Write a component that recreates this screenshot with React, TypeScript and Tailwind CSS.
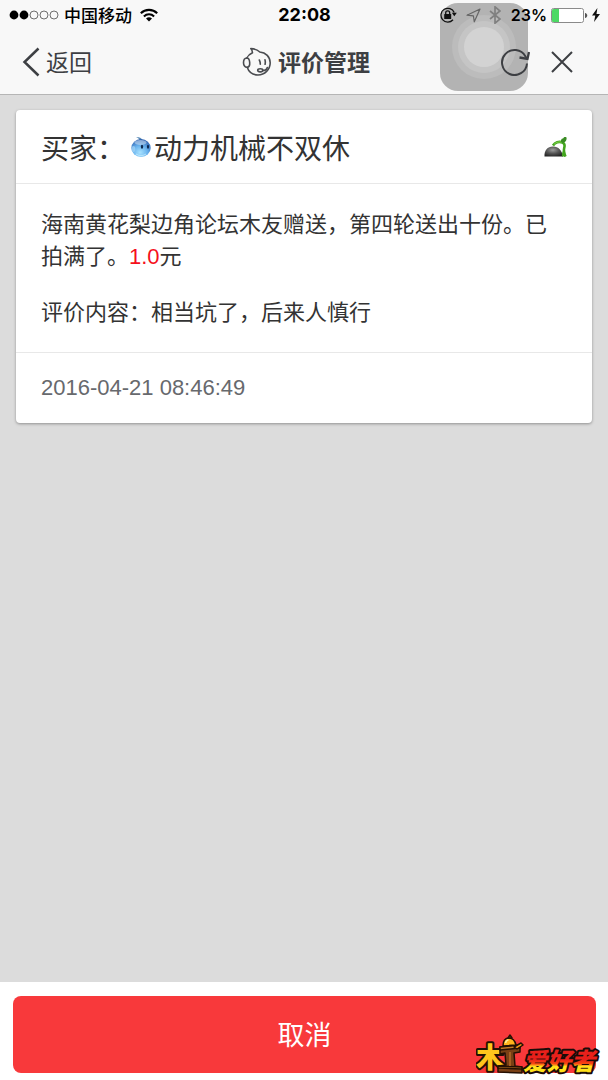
import { useState } from "react";

type Review = {
    buyer: string;
    product: string;
    price: string;
    content: string;
    time: string;
};

const review: Review = {
    buyer: "动力机械不双休",
    product: "海南黄花梨边角论坛木友赠送，第四轮送出十份。已拍满了。",
    price: "1.0",
    content: "相当坑了，后来人慎行",
    time: "2016-04-21 08:46:49",
};

const SignalDots = () => (
    <svg className="w-[50px] h-[10px]" viewBox="0 0 50 10" fill="none">
        {[0, 1, 2, 3, 4].map((i) => (
            <circle key={i} cx={5 + i * 10} cy="5" r={i < 2 ? 4.4 : 4} fill={i < 2 ? "#000" : "none"} stroke={i < 2 ? "none" : "#333"} strokeWidth="0.7" />
        ))}
    </svg>
);

const Wifi = () => (
    <svg className="w-[18px] h-[14px]" viewBox="0 0 18 14" fill="none" stroke="#000" strokeWidth="2.1">
        <path d="M0.8 5.2a11.7 11.7 0 0 1 16.4 0" />
        <path d="M3.9 8.4a7.3 7.3 0 0 1 10.2 0" />
        <path d="M9 13.4 6 10.6a4.3 4.3 0 0 1 6 0z" fill="#000" stroke="none" />
    </svg>
);

const RotationLock = () => (
    <svg className="w-[17px] h-[16px]" viewBox="0 0 17 16" fill="none" stroke="#111">
        <path d="M14.2 5.500A6.900 6.900 0 1 0 13 12.800" strokeWidth="1.300" />
        <path d="M11.800 5.800h5l-2.500 3.400z" fill="#111" stroke="none" />
        <rect x="4.200" y="7" width="7" height="5" rx="0.600" fill="#111" stroke="none" />
        <path d="M5.700 7.400V5.800a2 2 0 0 1 4 0v1.600" strokeWidth="1.300" />
    </svg>
);

const Location = () => (
    <svg className="w-[15px] h-[15px]" viewBox="0 0 15 15" fill="none" stroke="#666" strokeWidth="1.200">
        <path d="M14 1 8.300 13.800 7.400 7.800 1 7.200z" strokeLinejoin="round" />
    </svg>
);

const Bluetooth = () => (
    <svg className="w-[12px] h-[18px]" viewBox="0 0 12 18" fill="none" stroke="#808080" strokeWidth="1.700">
        <path d="M1 5l10 8-5 4.200V.8L11 5 1 13" />
    </svg>
);

const Battery = () => (
    <svg className="w-[37px] h-[15px]" viewBox="0 0 37 15" fill="none">
        <rect x="0.500" y="0.500" width="32" height="14" rx="2" fill="#fff" stroke="#8a8a8a" />
        <path d="M2.500 1H8v13H2.500A1.500 1.500 0 0 1 1 12.500v-10A1.500 1.500 0 0 1 2.500 1z" fill="#4cd964" />
        <path d="M34 5c3 .6 3 4.400 0 5z" fill="#555" />
    </svg>
);

const Bolt = () => (
    <svg className="w-[8px] h-[14px]" viewBox="0 0 8 14">
        <path d="M5.400 0 0 7.600h3.300L2 14l6-8H4.500z" fill="#111" />
    </svg>
);

const WangWangOutline = () => (
    <svg className="w-[30px] h-[30px]" viewBox="0 0 30 30" fill="none" stroke="#4a4c50" strokeWidth="1.600" strokeLinecap="round" strokeLinejoin="round">
        <path d="M4.800 11C6 8.500 8.200 6.800 10.500 5.800 10.500 4.300 9.900 2.700 8.800 1.500c3.300.2 6.500 1.200 9 3.500 6 .5 10.400 5 10.400 10.800C28.200 22.500 22.700 28 16 28c-5 0-9.200-3-10.800-7.700" />
        <path d="M4.800 11C2.700 11.200 1.500 13 1.500 15.700c0 2.700 1.500 4.800 3.700 4.600 2-.2 2.700-2.300 2.500-4.800C7.500 12.900 6.500 11 4.800 11z" />
        <path d="M17.300 13c.7 1.300 1 2.700 1 4.300M23 12.800c.4 1.400.4 3 .1 4.500" />
        <path d="M25.300 20.500c-.4 2-2 3-4.600 3" />
        <ellipse cx="18.300" cy="23.300" rx="2.600" ry="1.600" />
    </svg>
);

const WangWangBlue = () => (
    <svg className="w-[22px] h-[22px]" viewBox="0 0 22 22">
        <defs>
            <radialGradient id="wwBody" cx="0.45" cy="0.75" r="0.75">
                <stop offset="0" stopColor="#a8e2ff" />
                <stop offset="0.5" stopColor="#69b3ee" />
                <stop offset="1" stopColor="#2c5fae" />
            </radialGradient>
        </defs>
        <path d="M9.500 4C9 2.600 7.500 1.600 6 1c3-.2 5.500 1 6.500 3z" fill="#5688b5" />
        <ellipse cx="11" cy="12" rx="9.700" ry="9" fill="url(#wwBody)" />
        <ellipse cx="10.500" cy="6.500" rx="6" ry="2.500" fill="#fff" opacity="0.400" />
        <ellipse cx="3.500" cy="13" rx="1.800" ry="3" fill="#a5d4f5" opacity="0.700" />
        <ellipse cx="12" cy="10.800" rx="1.200" ry="2" fill="#102a50" />
        <ellipse cx="18" cy="10.800" rx="1.100" ry="2" fill="#102a50" />
        <path d="M6 18c3 2 7 2 10 0" stroke="#c4ecff" strokeWidth="1.500" fill="none" opacity="0.700" />
    </svg>
);

const Sprout = () => (
    <svg className="w-[24px] h-[22px]" viewBox="0 0 24 22" fill="none">
        <defs>
            <radialGradient id="seed" cx="0.45" cy="0.35" r="0.7">
                <stop offset="0" stopColor="#9c9c9c" />
                <stop offset="0.5" stopColor="#555" />
                <stop offset="1" stopColor="#222" />
            </radialGradient>
        </defs>
        <path d="M0.500 20.500C0 14.500 3.500 10.500 9 10.500c5.500 0 9 4 10 10z" fill="url(#seed)" />
        <path d="M9 9.500C11 6.500 15 5 18.500 6.500c2 1 2.500 3 1.700 5.500-.7 2.500-.2 5 1.300 8.500" stroke="#43a51f" strokeWidth="2.600" />
        <path d="M10 8.300c2.200-2.300 5.500-3 8.400-2" stroke="#86d84d" strokeWidth="0.900" />
        <path d="M17 6c-.3-2.500 1-4 2-3.300C19.500 1 21.300.6 22.500 1.500 23 4 21.500 6.500 18.500 7z" fill="#398c24" />
        <path d="M18 20.500c-.5-2.500.3-5 2-7l1.500 7z" fill="#43a51f" />
    </svg>
);

const Watermark = () => (
    <svg className="absolute right-[6px] bottom-0 w-[126px] h-[46px] pointer-events-none" viewBox="0 0 126 46">
        <defs>
            <linearGradient id="fire" x1="0" y1="0" x2="0" y2="1">
                <stop offset="0.5" stopColor="#e8201b" />
                <stop offset="0.62" stopColor="#f84a12" />
                <stop offset="0.7" stopColor="#ffe21a" />
            </linearGradient>
        </defs>
        <g fontFamily="'Noto Sans CJK SC', sans-serif" fontWeight="900" strokeLinejoin="round" paintOrder="stroke">
            <text x="0" y="34" fontSize="28" fill="#ffc51c" stroke="#241003" strokeWidth="4">
                木
            </text>
            <text x="47" y="36" fontSize="24" fontStyle="italic" fill="url(#fire)" stroke="#190b08" strokeWidth="4">
                爱好者
            </text>
        </g>
        <g stroke="#241003" strokeWidth="1.500" strokeLinejoin="round">
            <path d="M24 13 44 11v7l-6 1 1 13 7 1v6l-24-1v-6l8-1-1-12-5 1z" fill="#7a4015" />
            <path d="m24 13 20-2v3l-20 2zM22 32l24 1v2l-24-1z" fill="#c57924" />
            <path d="M27 12c0-5 2-8 6-8s6 3 7 7z" fill="#ffb51c" />
            <path d="M32 4 34 1l2 3zM38 13l7-4 2 2-6 4z" fill="#f19719" />
        </g>
        <path d="M29.500 9c.5-2 1.500-3 3-3" stroke="#fff0a0" strokeWidth="1.500" fill="none" />
        <path d="M34 18v14" stroke="#a65f22" strokeWidth="2" />
    </svg>
);

const StatusBar = () => (
    <div className="relative grid grid-cols-3 items-center h-[30px] pl-[9px] pr-2 text-black text-[17px] leading-[30px]">
        <div className="flex items-center">
            <SignalDots />
            <span className="ml-[5px] mr-2 font-medium whitespace-nowrap">中国移动</span>
            <Wifi />
        </div>
        <div className="text-center font-[Inter] text-lg leading-[30px] font-bold">22:08</div>
        <div className="flex items-center justify-end">
            <RotationLock />
            <span className="ml-[9px]">
                <Location />
            </span>
            <span className="ml-2 mr-[10px]">
                <Bluetooth />
            </span>
            <span className="mr-1 font-[Inter] text-base leading-[30px] font-semibold">23%</span>
            <Battery />
            <span className="ml-1">
                <Bolt />
            </span>
        </div>
    </div>
);

const TouchButton = () => (
    <div className="absolute right-20 top-[3px] flex items-center justify-center w-[88px] h-[88px] rounded-[18px] bg-[#b3b3b3]">
        <div className="flex items-center justify-center w-16 h-16 rounded-full bg-[#bcbcbc]">
            <div className="flex items-center justify-center w-[52px] h-[52px] rounded-full bg-[#c5c5c5]">
                <div className="w-10 h-10 rounded-full bg-[#d3d3d3]"></div>
            </div>
        </div>
    </div>
);

const NavBar = () => (
    <div className="relative flex items-center justify-between h-16 pl-[22px] pr-[34px] text-[#3d3f43]">
        <button className="flex items-center text-[23px] leading-8">
            <svg className="w-[18px] h-[30px] mr-[6px]" viewBox="0 0 18 30" fill="none" stroke="currentColor" strokeWidth="2.500">
                <path d="M16.500 1.500 2.500 15l14 13.500" />
            </svg>
            <span className="pb-[2px]">返回</span>
        </button>
        <h1 className="absolute inset-x-0 mx-auto flex items-center justify-center gap-[6px] w-fit pl-1 text-[23px] leading-8 font-bold">
            <WangWangOutline />
            <span className="pb-[2px]">评价管理</span>
        </h1>
        <div className="flex items-center gap-5">
            <button aria-label="刷新">
                <svg className="w-[30px] h-[28px]" viewBox="0 0 30 28" fill="none" stroke="currentColor" strokeWidth="2">
                    <path d="M27 15.500A12.500 12.500 0 1 1 25.500 8.500L27.500 11" />
                    <path d="M19.500 9.500l8 1.500 1.500-7" strokeWidth="2.300" />
                </svg>
            </button>
            <button aria-label="关闭">
                <svg className="w-[24px] h-[24px]" viewBox="0 0 24 24" fill="none" stroke="currentColor" strokeWidth="2">
                    <path d="M2 2l20 20M22 2 2 22" />
                </svg>
            </button>
        </div>
    </div>
);

const ReviewCard = ({ item }: { item: Review }) => (
    <article className="mx-4 mt-[15px] bg-white rounded-sm shadow-[0_1px_3px_rgba(0,0,0,0.35)] text-[#333] text-[22px] leading-8">
        <header className="flex items-center justify-between h-[74px] pl-[25px] pr-6 border-b border-[#e8e8e8]">
            <h2 className="flex items-center text-[28px] leading-10">
                <span className="mr-[5px]">买家：</span>
                <WangWangBlue />
                <span className="ml-[2px]">{item.buyer}</span>
            </h2>
            <Sprout />
        </header>
        <div className="px-[25px] pt-[22px] pb-[26px] border-b border-[#e8e8e8]">
            <p>
                {item.product}
                <span className="font-['Liberation_Sans'] leading-none text-[#f5101c]">{item.price}</span>元
            </p>
            <p className="mt-6">评价内容：{item.content}</p>
        </div>
        <footer className="px-[25px] py-[19px] font-['Liberation_Sans'] text-[#67696d]">
            <time>{item.time}</time>
        </footer>
    </article>
);

export default () => {
    const [visible, setVisible] = useState(true);

    return (
        <div className="flex flex-col min-h-screen bg-[#dcdcdc] font-['Noto_Sans_CJK_SC',sans-serif]">
            <div className="relative bg-[#f8f8f8] border-b border-[#b5b5b5]">
                <TouchButton />
                <StatusBar />
                <NavBar />
            </div>
            <main className="flex-1">{visible && <ReviewCard item={review} />}</main>
            <div className="relative pl-[13px] pr-3 pt-[14px] pb-[7px] bg-white">
                <button onClick={() => setVisible(false)} className="block w-full h-[77px] pb-[2px] rounded-lg bg-[#f8393b] text-white text-[27px] leading-8">
                    取消
                </button>
                <Watermark />
            </div>
        </div>
    );
};
